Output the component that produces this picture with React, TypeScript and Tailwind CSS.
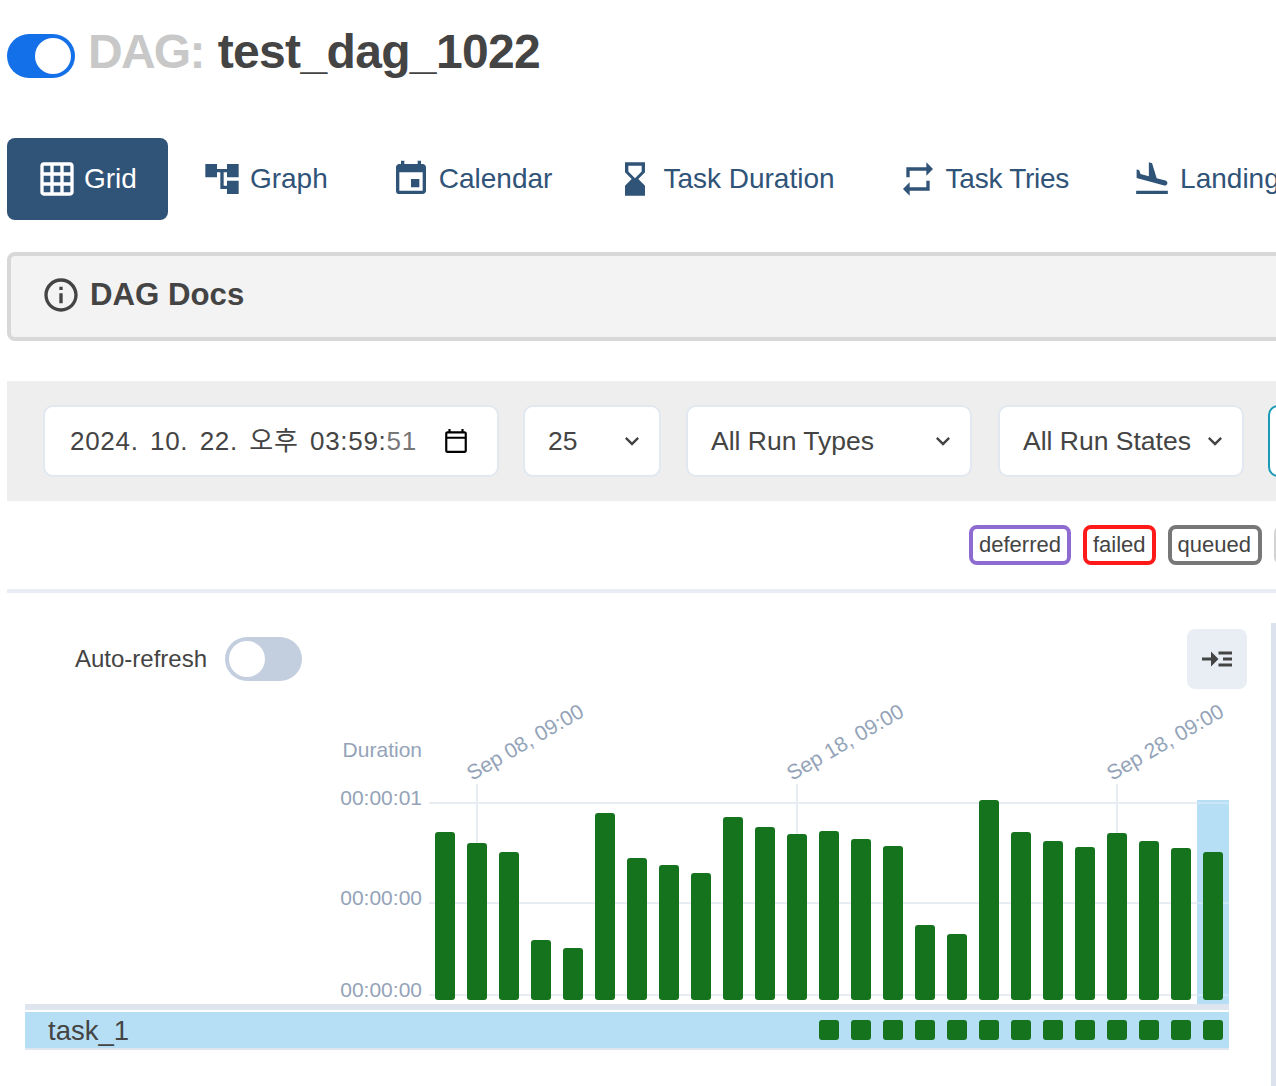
import { MdGridOn, MdAccountTree, MdEvent, MdHourglassBottom, MdRepeat, MdFlightLand, MdReadMore, MdOutlineInfo, MdKeyboardArrowDown, MdOutlineCalendarToday } from 'react-icons/md'
import type { IconType } from 'react-icons'

const tabs: { label: string; icon: IconType; cls: string }[] = [
  { label: 'Grid', icon: MdGridOn, cls: 'gap-[7px] pl-[30px] pr-[31px] bg-[#305378] text-white' },
  { label: 'Graph', icon: MdAccountTree, cls: 'gap-[8px] pl-[30px] pr-[29px] text-[#305378]' },
  { label: 'Calendar', icon: MdEvent, cls: 'gap-[8px] pl-[30px] pr-[29px] text-[#305378]' },
  { label: 'Task Duration', icon: MdHourglassBottom, cls: 'gap-[8px] pl-[30px] pr-[29px] text-[#305378]' },
  { label: 'Task Tries', icon: MdRepeat, cls: 'gap-[8px] pl-[30px] pr-[29px] text-[#305378] tracking-[-0.25px]' },
  { label: 'Landing Times', icon: MdFlightLand, cls: 'gap-[8px] pl-[30px] pr-[29px] text-[#305378]' },
]

const barTops = [832, 843, 852, 940, 948, 813, 858, 865, 873, 817, 827, 834, 831, 839, 846, 925, 934, 800, 832, 841, 847, 833, 841, 848, 852]
const gridLines = [803, 903, 995]
const ticks = [
  { x: 477, label: 'Sep 08, 09:00' },
  { x: 797, label: 'Sep 18, 09:00' },
  { x: 1117, label: 'Sep 28, 09:00' },
]
const legend = [
  { label: 'deferred', cls: 'border-[#8e6bd1]' },
  { label: 'failed', cls: 'border-[#ff1a1a]' },
  { label: 'queued', cls: 'border-[#777777] pr-[7px]' },
  { label: 'removed', cls: 'border-[#d3d3d3]' },
]

function Select({ label, cls }: { label: string; cls: string }) {
  return (
    <div className={`${cls} h-[72px] shrink-0 flex items-center justify-between pl-[23px] pr-[13px] bg-white border-[2px] border-[#e2e8f0] rounded-[10px] text-[26.5px]`}>
      <span className="pt-[1px]">{label}</span>
      <MdKeyboardArrowDown size={28} />
    </div>
  )
}

function Chart() {
  // svg origin sits at page x=25, y=689, so numbers below are page coordinates
  return (
    <svg width={1204} height={315} viewBox="25 689 1204 315" className="block" fontFamily="'Liberation Sans', sans-serif">
      <rect x={1197} y={800} width={32} height={204} fill="#b6dff6" />
      {gridLines.map((y) => (
        <g key={y}>
          <line x1={429} x2={1197} y1={y} y2={y} stroke="#e8edf3" strokeWidth={2} />
          <line x1={1197} x2={1229} y1={y} y2={y} stroke="#c9e7f8" strokeWidth={2} />
        </g>
      ))}
      {ticks.map((t) => (
        <g key={t.x}>
          <line x1={t.x} x2={t.x} y1={784} y2={850} stroke="#e8edf3" strokeWidth={2} />
          <text x={t.x - 5} y={781} fontSize={21} fill="#94a3b8" transform={`rotate(-30 ${t.x - 5} 781)`}>
            {t.label}
          </text>
        </g>
      ))}
      <text x={422} y={757} fontSize={21} fill="#94a3b8" textAnchor="end">Duration</text>
      <text x={422} y={805} fontSize={21} fill="#94a3b8" textAnchor="end">00:00:01</text>
      <text x={422} y={905} fontSize={21} fill="#94a3b8" textAnchor="end">00:00:00</text>
      <text x={422} y={997} fontSize={21} fill="#94a3b8" textAnchor="end">00:00:00</text>
      {barTops.map((top, i) => (
        <rect key={i} x={435 + i * 32} y={top} width={20} height={1000 - top} rx={3} fill="#16731d" />
      ))}
    </svg>
  )
}

export default function App() {
  return (
    <div className="w-[1276px] h-[1086px] overflow-hidden bg-white text-[#444444] font-['Liberation_Sans','Noto_Sans_CJK_KR',sans-serif]">
      <div className="w-[1700px] pl-[7px]">
        <h1 className="flex items-center h-[104px] text-[48px] font-bold leading-none tracking-[-0.65px]">
          <span className="w-[68px] h-[44px] mt-[8px] shrink-0 flex justify-end items-center bg-[#1470e8] rounded-full p-[4px] mr-[13px]">
            <span className="w-[36px] h-[36px] rounded-full bg-white" />
          </span>
          <span className="text-[#c8c8c8] mr-[14px] tracking-[-1.75px]">DAG:</span>
          <span>test_dag_1022</span>
        </h1>

        <nav className="flex gap-1 mt-[34px] h-[82px]">
          {tabs.map((t) => {
            const Icon = t.icon
            return (
              <a key={t.label} className={`flex items-center rounded-[8px] text-[28px] ${t.cls}`}>
                <Icon size={40} />
                {t.label}
              </a>
            )
          })}
        </nav>

        <div className="flex items-center gap-[9px] mt-[32px] h-[89px] pl-[30px] pb-[3px] bg-[#f3f3f3] border-[4px] border-[#d8d8d8] rounded-[8px] text-[31.2px] font-bold">
          <MdOutlineInfo size={40} />
          <span>DAG Docs</span>
        </div>

        <div className="flex items-center gap-[24px] mt-[40px] h-[120px] pl-[36px] bg-[#eeeeee]">
          <div className="w-[456px] h-[72px] shrink-0 flex items-center justify-between pl-[25px] pr-[28px] bg-white border-[2px] border-[#e2e8f0] rounded-[10px] text-[26px]">
            <span className="whitespace-pre tracking-[0.7px] [word-spacing:3.5px]">
              2024. 10. 22. 오후 03:59:<span className="text-[#777777]">51</span>
            </span>
            <MdOutlineCalendarToday size={26} className="text-black" />
          </div>
          <Select label="25" cls="w-[138px] mr-[1px]" />
          <Select label="All Run Types" cls="w-[286px] mr-[2px]" />
          <Select label="All Run States" cls="w-[246px]" />
          <div className="w-[200px] h-[72px] shrink-0 bg-white border-[2px] border-[#1b9ab8] rounded-[10px]" />
        </div>

        <div className="flex gap-[12px] h-[92px] pt-[24px] pl-[962px] border-b-[4px] border-[#e8eef4]">
          {legend.map((s) => (
            <span key={s.label} className={`h-[40px] flex items-center pl-[6px] pr-[6px] pb-[1px] border-[4px] rounded-[8px] text-[22px] ${s.cls}`}>
              {s.label}
            </span>
          ))}
        </div>

        <div className="flex mt-[30px]">
          <div className="w-[1264px] shrink-0 pl-[18px]">
            <div className="flex items-center justify-between w-[1222px] h-[60px] mt-[6px] pl-[50px]">
              <div className="flex items-center gap-[18px] text-[24px]">
                <span>Auto-refresh</span>
                <span className="w-[77px] h-[44px] flex items-center bg-[#c3cfdf] rounded-full p-[4px]">
                  <span className="w-[36px] h-[36px] rounded-full bg-white" />
                </span>
              </div>
              <button className="w-[60px] h-[60px] flex items-center justify-center bg-[#e9eef5] rounded-[8px]">
                <MdReadMore size={36} />
              </button>
            </div>
            <Chart />
            <div className="w-[1204px] h-[6px] bg-[#dfe5ef]" />
            <div className="w-[1204px] h-[38px] mt-[2px] flex items-center justify-between pl-[23px] pr-[6px] bg-[#b6dff6] border-b-[2px] border-[#dfe5ef] text-[27.5px]">
              <span className="pt-[1px]">task_1</span>
              <div className="flex gap-[12px]">
                {Array.from({ length: 13 }).map((_, i) => (
                  <span key={i} className="block w-[20px] h-[20px] rounded-[3px] bg-[#16731d]" />
                ))}
              </div>
            </div>
          </div>
          <div className="w-[200px] h-[463px] border-l-[5px] border-[#dde3ee]" />
        </div>
      </div>
    </div>
  )
}
